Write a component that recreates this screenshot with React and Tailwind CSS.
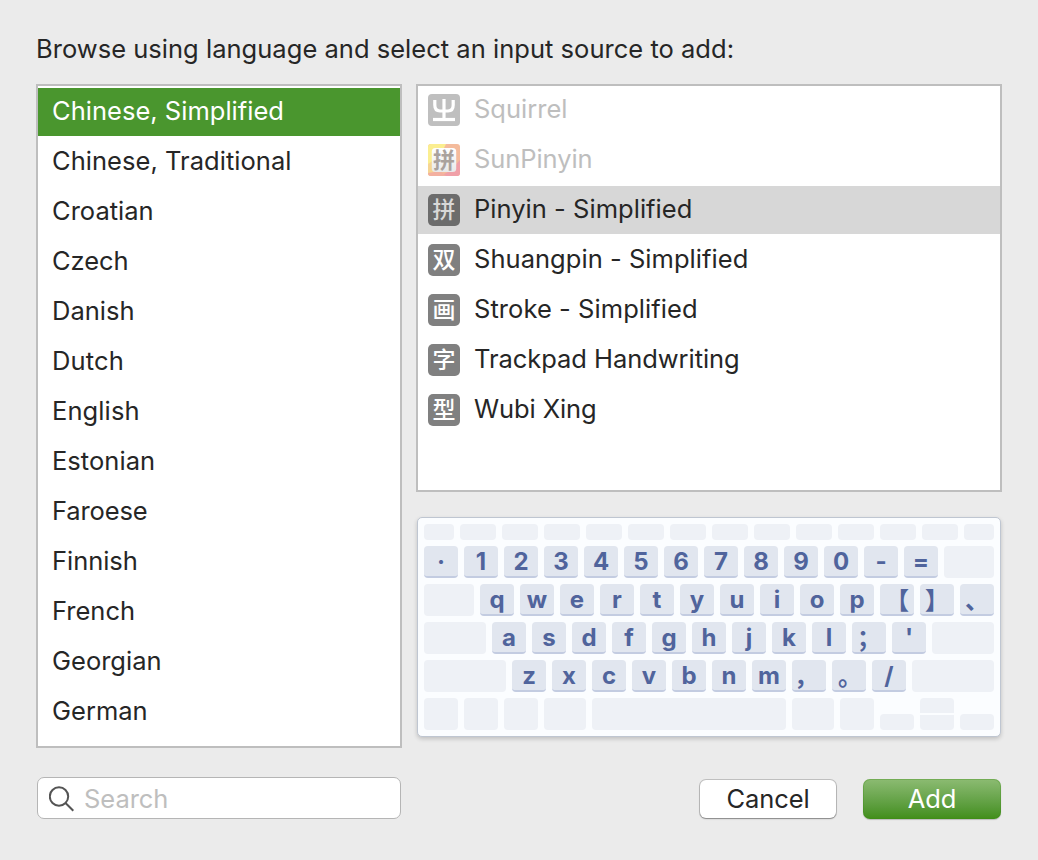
import React from "react";

const LANGUAGES = [
  ["Chinese, Simplified", "tracking-[0.02px]"],
  ["Chinese, Traditional", "tracking-[0.038px]"],
  ["Croatian", "tracking-[0.015px]"],
  ["Czech", "tracking-[-0.05px]"],
  ["Danish", "tracking-[0.015px]"],
  ["Dutch", "tracking-[0.15px]"],
  ["English", "tracking-[0.1px]"],
  ["Estonian", "tracking-[0.038px]"],
  ["Faroese", "tracking-[-0.14px]"],
  ["Finnish", "tracking-[-0.04px]"],
  ["French", "tracking-normal"],
  ["Georgian", "tracking-normal"],
  ["German", "tracking-normal"],
];

const SOURCES = [
  { name: "Squirrel", icon: "squirrel", disabled: true, tracking: "tracking-[0.01px]" },
  { name: "SunPinyin", icon: "sun", disabled: true, tracking: "tracking-[-0.083px]" },
  { name: "Pinyin - Simplified", icon: "拼", selected: true, tracking: "tracking-[0.03px]" },
  { name: "Shuangpin - Simplified", icon: "双", tracking: "tracking-[0.04px]" },
  { name: "Stroke - Simplified", icon: "画", tracking: "tracking-[0.06px]" },
  { name: "Trackpad Handwriting", icon: "字", tracking: "tracking-[-0.05px]" },
  { name: "Wubi Xing", icon: "型", tracking: "tracking-[-0.1px]" },
];

const HAN = "font-['Noto_Sans_CJK_SC',sans-serif]";

function SunIcon() {
  return (
    <span className="grid size-8 shrink-0 place-items-center">
      <svg className="col-start-1 row-start-1 size-8" viewBox="0 0 32 32">
        <defs>
          <clipPath id="sunTile"><rect width="32" height="32" rx="3" /></clipPath>
          <linearGradient id="sunPaper" x1="0" y1="0" x2="0" y2="1">
            <stop offset="0" stopColor="#ffffff" />
            <stop offset="1" stopColor="#e9e9e9" />
          </linearGradient>
        </defs>
        <g clipPath="url(#sunTile)">
          <rect width="32" height="32" fill="#f4bb9c" />
          <path d="M0 0H18L14 8L4 19L0 22Z" fill="#fbee90" />
          <path d="M0 20L6 16V32H0Z" fill="#f6d592" />
          <path d="M32 16V32H12L22 27Z" fill="#f0a0a8" />
          <path d="M0 32V29L12 27L18 32Z" fill="#f3b0a0" />
        </g>
        <rect x="3.800" y="4" width="24.400" height="24" rx="3.500" fill="url(#sunPaper)" />
      </svg>
      <span className={`${HAN} col-start-1 row-start-1 -mt-1 text-[22px] leading-8 font-bold text-[#aaa29d]`}>拼</span>
    </span>
  );
}

function SourceIcon({ icon, selected }) {
  if (icon === "squirrel") {
    return (
      <svg className="size-8 shrink-0" viewBox="0 0 32 32" fill="none">
        <rect width="32" height="32" rx="4" fill="#bfbfbf" />
        <g stroke="#fff" strokeWidth="3.200">
          <path d="M16 5V25" />
          <path d="M6.800 6V11Q6.800 17 12 17H20Q25.200 17 25.200 11V6" />
          <path d="M5 25.500H27" />
        </g>
      </svg>
    );
  }
  if (icon === "sun") return <SunIcon />;
  return (
    <span
      className={`${HAN} flex size-8 shrink-0 justify-center rounded-[5px] text-[23px] leading-[29px] font-medium ${
        selected ? "bg-[#6c6c6c] text-[#d8d8d8]" : "bg-[#808080] text-white"
      }`}
    >
      {icon}
    </span>
  );
}

function Blank({ className }) {
  return <div className={`shrink-0 bg-[#eef1f6] ${className}`} />;
}

const WIDE_OFFSET = {
  "、": "ml-0",
  "，": "-ml-1.5",
  "。": "ml-0.5",
  "；": "ml-0",
  "【": "ml-0",
  "】": "ml-0",
};

function Key({ label }) {
  const wide = label in WIDE_OFFSET;
  return (
    <div
      className={`${
        wide ? "font-['Noto_Sans_CJK_SC',sans-serif] leading-[30px]" : "font-['Inter',sans-serif] leading-8"
      } flex h-8 w-[34px] shrink-0 justify-center rounded border-b-2 border-[#c3cce1] bg-[#e1e6ef] text-[24px] font-bold text-[#50649c]`}
    >
      <span className={`w-6 whitespace-nowrap text-center ${wide ? WIDE_OFFSET[label] : ""}`}>{label}</span>
    </div>
  );
}

const keys = (labels) => labels.map((l) => <Key key={l} label={l} />);

function Keyboard() {
  return (
    <div className="ml-px flex h-[220px] w-[584px] flex-col gap-1.5 rounded-[5px] border border-[#bfc6d1] bg-[#fbfdff] px-1.5 pt-1.5 shadow-[0_2px_4px_rgba(0,0,0,0.18)]">
      <div className="flex gap-1.5">
        <Blank className="h-4 w-[30px] rounded" />
        {Array.from({ length: 12 }, (_, i) => <Blank key={i} className="h-4 w-9 rounded" />)}
        <Blank className="h-4 w-[30px] rounded" />
      </div>
      <div className="flex gap-1.5">
        {keys(["·", "1", "2", "3", "4", "5", "6", "7", "8", "9", "0", "-", "="])}
        <Blank className="h-8 w-[50px] rounded" />
      </div>
      <div className="flex gap-1.5">
        <Blank className="h-8 w-[50px] rounded" />
        {keys(["q", "w", "e", "r", "t", "y", "u", "i", "o", "p", "【", "】", "、"])}
      </div>
      <div className="flex gap-1.5">
        <Blank className="h-8 w-[62px] rounded" />
        {keys(["a", "s", "d", "f", "g", "h", "j", "k", "l", "；", "'"])}
        <Blank className="h-8 w-[62px] rounded" />
      </div>
      <div className="flex gap-1.5">
        <Blank className="h-8 w-[82px] rounded" />
        {keys(["z", "x", "c", "v", "b", "n", "m", "，", "。", "/"])}
        <Blank className="h-8 w-[82px] rounded" />
      </div>
      <div className="flex items-end gap-1.5">
        <Blank className="h-8 w-[34px] rounded" />
        <Blank className="h-8 w-[34px] rounded" />
        <Blank className="h-8 w-[34px] rounded" />
        <Blank className="h-8 w-[42px] rounded" />
        <Blank className="h-8 w-[194px] rounded" />
        <Blank className="h-8 w-[42px] rounded" />
        <Blank className="h-8 w-[34px] rounded" />
        <Blank className="h-4 w-[34px] rounded" />
        <div className="flex flex-col gap-0.5">
          <Blank className="h-[15px] w-[34px] rounded-t" />
          <Blank className="h-[15px] w-[34px] rounded-b" />
        </div>
        <Blank className="h-4 w-[34px] rounded" />
      </div>
    </div>
  );
}

export default function App() {
  return (
    <div className="h-[860px] w-[1038px] overflow-hidden bg-[#ebebeb] px-9 pt-[31px] font-['Inter',sans-serif] text-[25.5px] leading-9 text-[#262626]">
      <h1 className="h-[53px] whitespace-nowrap tracking-[0.025px]">
        Browse using language and select an input source to add:
      </h1>

      <div className="flex gap-3.5">
        <ul className="flex h-[664px] w-[366px] flex-col gap-0.5 border-2 border-[#bebebe] bg-white pt-0.5">
          {LANGUAGES.map(([name, tracking], i) => (
            <li
              key={name}
              className={`flex h-12 shrink-0 items-center pb-0.5 pl-3.5 ${tracking} ${i === 0 ? "bg-[#4a962e] text-white" : ""}`}
            >
              {name}
            </li>
          ))}
        </ul>

        <div className="flex flex-col gap-[25px]">
          <ul className="flex h-[408px] w-[586px] flex-col gap-0.5 border-2 border-[#bebebe] bg-white">
            {SOURCES.map((s) => (
              <li
                key={s.name}
                className={`flex h-12 shrink-0 items-center gap-3.5 pl-2.5 ${s.selected ? "bg-[#d7d7d7]" : ""}`}
              >
                <SourceIcon icon={s.icon} selected={s.selected} />
                <span className={`pb-0.5 ${s.tracking} ${s.disabled ? "text-[#bebebe]" : ""}`}>{s.name}</span>
              </li>
            ))}
          </ul>
          <Keyboard />
        </div>
      </div>

      <div className="mt-[29px] flex items-start">
        <label className="ml-px flex h-[42px] w-[364px] items-center rounded-[7px] border border-[#b5b5b5] bg-white pt-0.5 pl-[11px]">
          <svg className="size-[26px] shrink-0" viewBox="0 0 26 26" fill="none" stroke="#545454" strokeWidth="2">
            <circle cx="10" cy="10.500" r="9.200" />
            <path d="M16.500 17L24.300 24.800" />
          </svg>
          <input
            className="ml-[9px] w-[300px] bg-transparent tracking-[-0.05px] outline-none placeholder:text-[#bebebe]"
            placeholder="Search"
          />
        </label>
        <button className="mt-[3px] ml-[299px] h-[38px] w-[136px] rounded-md bg-white tracking-[-0.12px] shadow-[0_0_0_1px_rgba(0,0,0,0.18),0_1px_1.5px_rgba(0,0,0,0.3)]">
          Cancel
        </button>
        <button className="mt-0.5 ml-[27px] h-10 w-[138px] rounded-[7px] bg-linear-to-b from-[#8cbb72] to-[#418e18] tracking-[-0.1px] text-white shadow-[inset_0_0_0_1px_rgba(60,140,20,0.3),0_1px_1px_rgba(0,0,0,0.2)]">
          Add
        </button>
      </div>
    </div>
  );
}
